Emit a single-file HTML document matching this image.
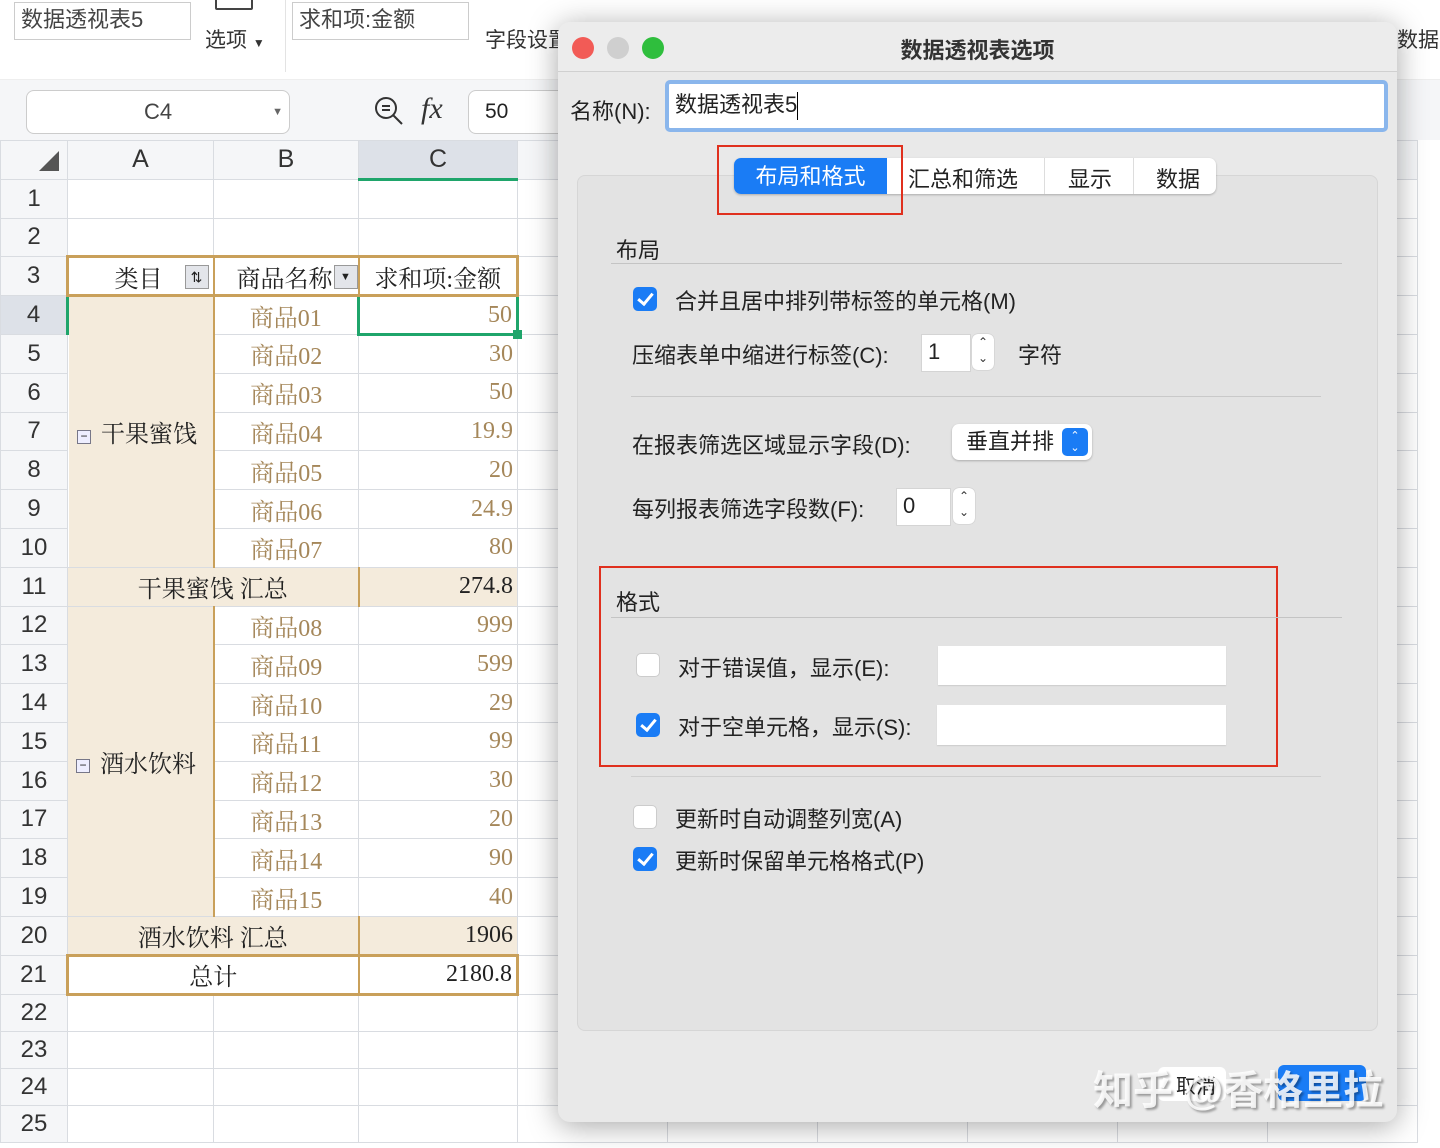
<!DOCTYPE html>
<html><head><meta charset="utf-8"><style>
*{box-sizing:border-box;margin:0;padding:0}
body{width:1440px;height:1148px;overflow:hidden;background:#fff;position:relative;font-family:"Liberation Sans","Noto Sans CJK SC",sans-serif;color:#222}
.abs{position:absolute}
.tb{position:absolute;background:#fff;border:1px solid #ccc;font-size:22px;color:#444;padding-left:6px;line-height:34px}
table.g{position:absolute;left:0;top:140px;border-collapse:collapse;table-layout:fixed}
table.g td{border:1px solid #d9dce1;height:38.8px;padding:0;font-family:"Liberation Serif","Noto Serif CJK SC",serif;font-size:24px;white-space:nowrap;overflow:hidden}
table.g tr.s td{height:37px}
table.g td.h{background:#f5f6f8;text-align:center;font-family:"Liberation Sans",sans-serif;color:#333;font-size:25px}
table.g td.rh{background:#f5f6f8;text-align:center;font-family:"Liberation Sans",sans-serif;color:#333;font-size:24px}
.gd{color:#a5875a}
.tan{background:#f4ebdc}
.r{text-align:right;padding-right:4px!important}
.c{text-align:center}
.dlg{position:absolute;left:558px;top:22px;width:839px;height:1100px;background:#e9e9e9;border-radius:12px;box-shadow:0 4px 30px rgba(0,0,0,.35);overflow:hidden}
.dlg .t{font-size:22px;color:#222;position:absolute;white-space:nowrap}
.cb{position:absolute;width:24px;height:24px;border-radius:5px;background:#1a7cf5}
.cb::after{content:"";position:absolute;left:8px;top:3px;width:6px;height:12px;border:solid #fff;border-width:0 3px 3px 0;transform:rotate(40deg)}
.cbo{position:absolute;width:24px;height:24px;border-radius:5px;background:#fff;border:1px solid #ccc}
.inp{position:absolute;background:#fff;border:1px solid #d4d4d4;font-size:22px;line-height:34px;padding-left:6px}
.step{position:absolute;width:22px;height:36px;background:#fff;border-radius:6px;box-shadow:0 0 1px #999;font-size:12px;text-align:center;line-height:16px;color:#333}
</style></head><body>
<div class="abs" style="left:0;top:0;width:1440px;height:80px;background:#fff;border-bottom:1px solid #eee"></div>
<div class="tb" style="left:14px;top:2px;width:177px;height:38px">数据透视表5</div>
<div class="abs" style="left:205px;top:24px;font-size:21px;color:#333">选项 <span style="font-size:12px">▼</span></div>
<div class="abs" style="left:215px;top:-8px;width:38px;height:18px;border:2px solid #444;border-radius:2px"></div>
<div class="abs" style="left:285px;top:0;width:1px;height:72px;background:#e3e3e3"></div>
<div class="tb" style="left:292px;top:2px;width:177px;height:38px">求和项:金额</div>
<div class="abs" style="left:485px;top:24px;font-size:21px;color:#333">字段设置</div>
<div class="abs" style="left:1397px;top:24px;font-size:21px;color:#333">数据</div>
<div class="abs" style="left:0;top:80px;width:1440px;height:60px;background:#f5f6f8"></div>
<div class="abs" style="left:26px;top:90px;width:264px;height:44px;background:#fff;border:1px solid #ccc;border-radius:8px;font-size:22px;color:#444;text-align:center;line-height:42px">C4<span style="position:absolute;right:6px;font-size:11px;color:#666">▼</span></div>
<svg class="abs" style="left:372px;top:94px" width="34" height="34" viewBox="0 0 34 34"><circle cx="14" cy="14" r="10" fill="none" stroke="#333" stroke-width="2"/><line x1="21" y1="21" x2="30" y2="30" stroke="#333" stroke-width="2"/><line x1="10" y1="12" x2="18" y2="12" stroke="#333" stroke-width="2"/><line x1="10" y1="16" x2="18" y2="16" stroke="#333" stroke-width="2"/></svg>
<div class="abs" style="left:421px;top:92px;font-size:30px;font-style:italic;font-family:'Liberation Serif',serif;color:#333">fx</div>
<div class="abs" style="left:468px;top:90px;width:100px;height:44px;background:#fff;border:1px solid #ccc;border-radius:8px;font-size:21px;line-height:42px;padding-left:16px">50</div>
<table class="g">
<colgroup><col style="width:67px"><col style="width:146px"><col style="width:145px"><col style="width:159px"><col style="width:150px"><col style="width:150px"><col style="width:150px"><col style="width:150px"><col style="width:150px"><col style="width:150px"></colgroup>
<tr><td class="h" style="position:relative"><span style="position:absolute;left:38px;top:10px;width:0;height:0;border-left:20px solid transparent;border-bottom:20px solid #555"></span></td><td class="h">A</td><td class="h">B</td><td class="h" style="background:#dde1e8;border-bottom:3px solid #1fa56b">C</td><td class="h"></td><td class="h"></td><td class="h"></td><td class="h"></td><td class="h"></td><td class="h"></td></tr>
<tr><td class="rh">1</td><td></td><td></td><td></td><td></td><td></td><td></td><td></td><td></td><td></td></tr>
<tr><td class="rh">2</td><td></td><td></td><td></td><td></td><td></td><td></td><td></td><td></td><td></td></tr>
<tr><td class="rh">3</td><td class="r" style="border:3px solid #c9a05a;border-right:2px solid #c9a05a;position:relative;padding-right:50px!important">类目<span style="position:absolute;right:4px;top:7px;width:24px;height:24px;background:#e3e5ea;border:1px solid #999;font-size:14px;text-align:center;line-height:22px;font-family:sans-serif">⇅</span></td><td style="border:3px solid #c9a05a;border-left:0;border-right:2px solid #c9a05a;position:relative;padding-left:22px">商品名称<span style="position:absolute;right:0;top:7px;width:24px;height:24px;background:#e3e5ea;border:1px solid #999;font-size:11px;text-align:center;line-height:22px">▼</span></td><td class="c" style="border:3px solid #c9a05a;border-left:0">求和项:金额</td><td></td><td></td><td></td><td></td><td></td><td></td></tr>
<tr><td class="rh" style="background:#dde1e8;border-right:3px solid #1fa56b">4</td><td class="tan" rowspan="7" style="border-right:2px solid #c9a05a;border-left:0;padding-left:8px"><span style="display:inline-block;width:14px;height:14px;border:1px solid #778;font-size:12px;line-height:10px;text-align:center;background:#eef;vertical-align:middle;margin-right:10px;font-family:sans-serif">−</span>干果蜜饯</td><td class="c gd">商品01</td><td class="r gd" style="border:3px solid #1fa56b;position:relative;overflow:visible">50<span style="position:absolute;right:-6px;bottom:-6px;width:9px;height:9px;background:#1fa56b"></span></td><td></td><td></td><td></td><td></td><td></td><td></td></tr>
<tr><td class="rh">5</td><td class="c gd">商品02</td><td class="r gd">30</td><td></td><td></td><td></td><td></td><td></td><td></td></tr>
<tr><td class="rh">6</td><td class="c gd">商品03</td><td class="r gd">50</td><td></td><td></td><td></td><td></td><td></td><td></td></tr>
<tr><td class="rh">7</td><td class="c gd">商品04</td><td class="r gd">19.9</td><td></td><td></td><td></td><td></td><td></td><td></td></tr>
<tr><td class="rh">8</td><td class="c gd">商品05</td><td class="r gd">20</td><td></td><td></td><td></td><td></td><td></td><td></td></tr>
<tr><td class="rh">9</td><td class="c gd">商品06</td><td class="r gd">24.9</td><td></td><td></td><td></td><td></td><td></td><td></td></tr>
<tr><td class="rh">10</td><td class="c gd">商品07</td><td class="r gd">80</td><td></td><td></td><td></td><td></td><td></td><td></td></tr>
<tr><td class="rh">11</td><td class="tan c" colspan="2" style="border-right:2px solid #c9a05a">干果蜜饯 汇总</td><td class="tan r">274.8</td><td></td><td></td><td></td><td></td><td></td><td></td></tr>
<tr><td class="rh">12</td><td class="tan" rowspan="8" style="border-right:2px solid #c9a05a;padding-left:8px"><span style="display:inline-block;width:14px;height:14px;border:1px solid #778;font-size:12px;line-height:10px;text-align:center;background:#eef;vertical-align:middle;margin-right:10px;font-family:sans-serif">−</span>酒水饮料</td><td class="c gd">商品08</td><td class="r gd">999</td><td></td><td></td><td></td><td></td><td></td><td></td></tr>
<tr><td class="rh">13</td><td class="c gd">商品09</td><td class="r gd">599</td><td></td><td></td><td></td><td></td><td></td><td></td></tr>
<tr><td class="rh">14</td><td class="c gd">商品10</td><td class="r gd">29</td><td></td><td></td><td></td><td></td><td></td><td></td></tr>
<tr><td class="rh">15</td><td class="c gd">商品11</td><td class="r gd">99</td><td></td><td></td><td></td><td></td><td></td><td></td></tr>
<tr><td class="rh">16</td><td class="c gd">商品12</td><td class="r gd">30</td><td></td><td></td><td></td><td></td><td></td><td></td></tr>
<tr><td class="rh">17</td><td class="c gd">商品13</td><td class="r gd">20</td><td></td><td></td><td></td><td></td><td></td><td></td></tr>
<tr><td class="rh">18</td><td class="c gd">商品14</td><td class="r gd">90</td><td></td><td></td><td></td><td></td><td></td><td></td></tr>
<tr><td class="rh">19</td><td class="c gd">商品15</td><td class="r gd">40</td><td></td><td></td><td></td><td></td><td></td><td></td></tr>
<tr><td class="rh">20</td><td class="tan c" colspan="2" style="border-right:2px solid #c9a05a">酒水饮料 汇总</td><td class="tan r">1906</td><td></td><td></td><td></td><td></td><td></td><td></td></tr>
<tr><td class="rh">21</td><td class="c" colspan="2" style="border:3px solid #c9a05a;border-right:2px solid #c9a05a">总计</td><td class="r" style="border:3px solid #c9a05a;border-left:0">2180.8</td><td></td><td></td><td></td><td></td><td></td><td></td></tr>
<tr class="s"><td class="rh">22</td><td></td><td></td><td></td><td></td><td></td><td></td><td></td><td></td><td></td></tr>
<tr class="s"><td class="rh">23</td><td></td><td></td><td></td><td></td><td></td><td></td><td></td><td></td><td></td></tr>
<tr class="s"><td class="rh">24</td><td></td><td></td><td></td><td></td><td></td><td></td><td></td><td></td><td></td></tr>
<tr class="s"><td class="rh">25</td><td></td><td></td><td></td><td></td><td></td><td></td><td></td><td></td><td></td></tr>
</table>
<div class="dlg">
 <div class="abs" style="left:0;top:0;width:839px;height:50px;background:#ececec;border-bottom:1px solid #d0d0d0"></div>
 <div class="abs" style="left:14px;top:15px;width:22px;height:22px;border-radius:50%;background:#f25b56"></div>
 <div class="abs" style="left:49px;top:15px;width:22px;height:22px;border-radius:50%;background:#cfcfcf"></div>
 <div class="abs" style="left:84px;top:15px;width:22px;height:22px;border-radius:50%;background:#2fbe3d"></div>
 <div class="t" style="left:0;width:839px;text-align:center;top:11px;font-weight:bold;color:#333">数据透视表选项</div>
 <div class="t" style="left:12px;top:72px">名称(N):</div>
 <div class="abs" style="left:107px;top:58px;width:723px;height:52px;border:4px solid #8ab6ec;border-radius:5px;background:#fff;font-size:22px;padding-left:6px;line-height:42px">数据透视表5<span style="display:inline-block;width:1px;height:28px;background:#000;vertical-align:middle"></span></div>
 <div class="abs" style="left:19px;top:153px;width:801px;height:856px;background:#e3e3e3;border:1px solid #d6d6d6;border-radius:8px"></div>
 <div class="abs" style="left:176px;top:136px;width:482px;height:36px;background:#fff;border-radius:7px;box-shadow:0 1px 2px rgba(0,0,0,.25)"></div>
 <div class="abs" style="left:176px;top:136px;width:153px;height:36px;background:#1a7cf5;border-radius:7px 0 0 7px;color:#fff;font-size:22px;text-align:center;line-height:38px">布局和格式</div>
 <div class="t" style="left:350px;top:140px">汇总和筛选</div>
 <div class="abs" style="left:486px;top:136px;width:1px;height:36px;background:#ddd"></div>
 <div class="t" style="left:510px;top:140px">显示</div>
 <div class="abs" style="left:575px;top:136px;width:1px;height:36px;background:#ddd"></div>
 <div class="t" style="left:598px;top:140px">数据</div>
 <div class="abs" style="left:159px;top:123px;width:186px;height:70px;border:2px solid #e0301e"></div>
 <div class="t" style="left:58px;top:211px">布局</div>
 <div class="abs" style="left:53px;top:241px;width:731px;height:1px;background:#c4c4c4"></div>
 <div class="cb" style="left:75px;top:265px"></div>
 <div class="t" style="left:117px;top:262px">合并且居中排列带标签的单元格(M)</div>
 <div class="t" style="left:74px;top:316px">压缩表单中缩进行标签(C):</div>
 <div class="inp" style="left:363px;top:312px;width:50px;height:38px">1</div>
 <div class="step" style="left:414px;top:312px">⌃<br>⌄</div>
 <div class="t" style="left:460px;top:316px">字符</div>
 <div class="abs" style="left:73px;top:374px;width:690px;height:1px;background:#c9c9c9"></div>
 <div class="t" style="left:74px;top:406px">在报表筛选区域显示字段(D):</div>
 <div class="abs" style="left:394px;top:402px;width:140px;height:36px;background:#fff;border-radius:7px;box-shadow:0 1px 2px rgba(0,0,0,.25);font-size:22px;line-height:36px;padding-left:14px">垂直并排</div>
 <div class="abs" style="left:504px;top:406px;width:26px;height:28px;background:#1a7cf5;border-radius:5px;color:#fff;font-size:11px;line-height:12px;text-align:center;padding-top:2px">⌃<br>⌄</div>
 <div class="t" style="left:74px;top:470px">每列报表筛选字段数(F):</div>
 <div class="inp" style="left:338px;top:466px;width:55px;height:38px">0</div>
 <div class="step" style="left:395px;top:466px">⌃<br>⌄</div>
 <div class="abs" style="left:41px;top:544px;width:679px;height:201px;border:2px solid #e0301e"></div>
 <div class="t" style="left:58px;top:563px">格式</div>
 <div class="abs" style="left:53px;top:595px;width:731px;height:1px;background:#c4c4c4"></div>
 <div class="cbo" style="left:78px;top:631px"></div>
 <div class="t" style="left:120px;top:629px">对于错误值，显示(E):</div>
 <div class="abs" style="left:380px;top:624px;width:288px;height:39px;background:#fff;box-shadow:0 1px 1px #ccc"></div>
 <div class="cb" style="left:78px;top:691px"></div>
 <div class="t" style="left:120px;top:688px">对于空单元格，显示(S):</div>
 <div class="abs" style="left:379px;top:683px;width:289px;height:40px;background:#fff;box-shadow:0 1px 1px #ccc"></div>
 <div class="abs" style="left:73px;top:754px;width:690px;height:1px;background:#cfcfcf"></div>
 <div class="cbo" style="left:75px;top:783px"></div>
 <div class="t" style="left:117px;top:780px">更新时自动调整列宽(A)</div>
 <div class="cb" style="left:75px;top:825px"></div>
 <div class="t" style="left:117px;top:822px">更新时保留单元格格式(P)</div>
 <div class="abs" style="left:600px;top:1045px;width:68px;height:34px;background:#fff;border-radius:6px"></div>
 <div class="t" style="left:618px;top:1048px;font-size:20px">取消</div>
 <div class="abs" style="left:720px;top:1043px;width:88px;height:36px;background:#1a7cf5;border-radius:6px"></div>
 <div class="t" style="left:535px;top:1036px;font-size:40px;color:rgba(255,255,255,.85);text-shadow:2px 2px 2px rgba(0,0,0,.35);font-weight:bold">知乎 @香格里拉</div>
</div>
</body></html>
